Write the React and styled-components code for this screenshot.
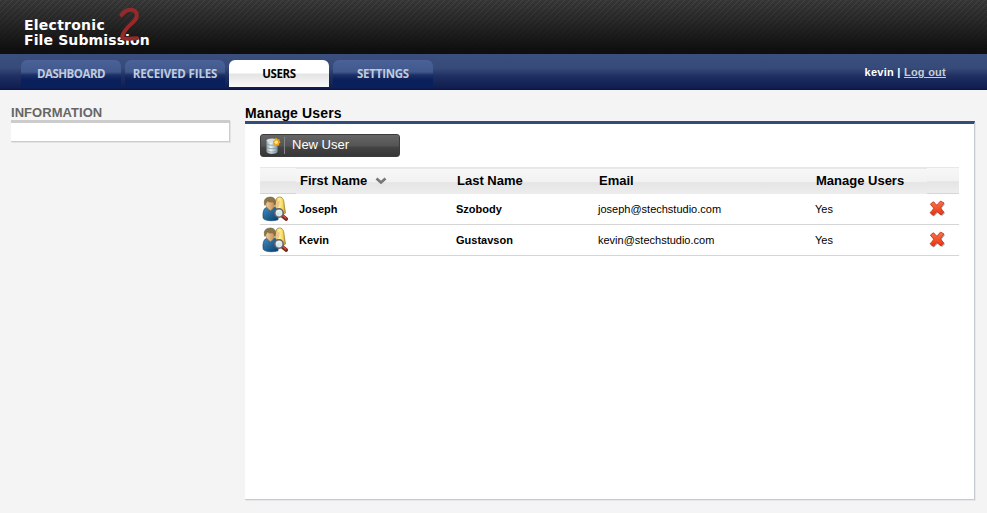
import React from "react";
import styled, { createGlobalStyle } from "styled-components";

const GlobalStyle = createGlobalStyle`
  body {
    margin: 0;
    background: #f4f4f4;
    font-family: "Liberation Sans", Arial, sans-serif;
    color: #000;
  }
  * { box-sizing: border-box; }
`;

const Page = styled.div`
  height: 513px;
  overflow: hidden;
`;

const Header = styled.header`
  height: 54px;
  padding: 18px 0 0 24px;
  position: relative;
  background:
    linear-gradient(rgba(54, 54, 54, 0.1), rgba(15, 15, 15, 1) 92%),
    repeating-linear-gradient(135deg, #484848 0 0.9px, #363636 1.2px 4.243px);
`;

const Logo = styled.div`
  font: bold 14px/15px "DejaVu Sans", Verdana, sans-serif;
  color: #fff;
  white-space: nowrap;
`;

const LogoLine = styled.div`
  letter-spacing: ${(p) => p.$spacing};
`;

const LogoMark = styled.svg`
  position: absolute;
  left: 116px;
  top: 6px;
`;

const Nav = styled.nav`
  height: 36px;
  padding: 6px 41px 3px 21px;
  display: flex;
  gap: 4px;
  background: linear-gradient(#3a4f7d 0, #364b79 14px, #202f62 22px, #0f1d4f 34px, #07144a 36px);
`;

const Tab = styled.a`
  width: 100px;
  height: 27px;
  border-radius: 6px 6px 0 0;
  display: flex;
  justify-content: center;
  font: 700 11.5px/28px "Open Sans", "Trebuchet MS", sans-serif;
  letter-spacing: ${(p) => p.$spacing};
  white-space: nowrap;
  color: ${(p) => (p.$active ? "#000" : "#c0cbdf")};
  background: ${(p) =>
    p.$active
      ? "linear-gradient(#fff 0, #fff 13px, #e4e4e4 14px, #f8f8f8 27px)"
      : "linear-gradient(#4a6298 0, #41588c 12px, #1b3066 15px, #0a205c 20px, #08205c 27px)"};
`;

const Account = styled.div`
  margin-left: auto;
  font-size: 11px;
  font-weight: bold;
  line-height: 24px;
  letter-spacing: 0.25px;
  color: #fff;
`;

const LogOut = styled.a`
  color: #c9ccd3;
  text-decoration: underline;
`;

const Content = styled.main`
  display: flex;
  gap: 15px;
  padding: 15px 11px 0;
`;

const Sidebar = styled.aside`
  width: 219px;
`;

const SideTitle = styled.h2`
  margin: 0;
  height: 15px;
  font-size: 13px;
  line-height: 16px;
  letter-spacing: 0.05px;
  color: #666;
`;

const SideBox = styled.div`
  height: 22px;
  background: #fff;
  border: solid #ccc;
  border-width: 3px 1px 1px 0;
  box-shadow: 1px 1px 0 #e3e3e3;
`;

const Main = styled.section`
  width: 730px;
`;

const Title = styled.h1`
  margin: 0;
  height: 16px;
  font-size: 14px;
  line-height: 17px;
  letter-spacing: 0.15px;
`;

const Panel = styled.div`
  height: 379px;
  padding: 10px 15px;
  background: #fff;
  border-top: 3px solid #344b7b;
  border-right: 1px solid #c5c9d2;
  border-bottom: 1px solid #c5c9d2;
  box-shadow: 1px 1px 0 #e5e7eb;
`;

const NewButton = styled.button`
  width: 140px;
  height: 23px;
  padding: 0 0 2px 4px;
  display: flex;
  align-items: center;
  border: 1px solid #3c3c3c;
  border-radius: 3px;
  background: linear-gradient(#666, #555 50%, #434343 60%, #363636);
  color: #fff;
  font: 13px "Liberation Sans", Arial, sans-serif;
`;

const Separator = styled.span`
  width: 1px;
  height: 17px;
  margin: 2px 7px 0 2px;
  background: #858585;
`;

const Table = styled.div`
  margin-top: 10px;
  width: 699px;
`;

const columns = "36px 157px 142px 217px 115px 32px";

const HeadRow = styled.div`
  display: grid;
  grid-template-columns: ${columns};
  height: 27px;
`;

const HeadCell = styled.div`
  display: flex;
  gap: 8px;
  padding-left: 4px;
  font-size: 13px;
  font-weight: bold;
  line-height: 24px;
  border-top: ${(p) => (p.$blank ? "1px" : "2px")} solid #e8e8e8;
  background: linear-gradient(#f7f7f7 0, #f2f2f2 50%, #e5e5e5 55%, #ededed 100%);
  border-bottom: ${(p) => (p.$blank ? "1px solid #d5d5d5" : "0")};
`;

const SortArrow = styled.svg`
  margin-top: 7px;
`;

const Row = styled.div`
  display: grid;
  grid-template-columns: ${columns};
  height: 31px;
  border-bottom: 1px solid #d5d5d5;
`;

const Cell = styled.div`
  padding-left: 3px;
  font-size: 11px;
  line-height: 31px;
  font-weight: ${(p) => (p.$bold ? "bold" : "normal")};
`;

const IconCell = styled.div`
  display: flex;
  padding: ${(p) => p.$pad};
`;

const DatabaseIcon = () => (
  <svg width="17" height="18" viewBox="0 -1 17 18">
    <defs>
      <linearGradient id="db" x1="0" x2="1">
        <stop offset="0" stopColor="#94a5b0" />
        <stop offset=".4" stopColor="#edf3f5" />
        <stop offset="1" stopColor="#7890a0" />
      </linearGradient>
    </defs>
    <path d="M1.5 3.5v11c0 3 11 3 11 0v-11z" fill="url(#db)" />
    <ellipse cx="7" cy="3.5" rx="5.5" ry="2" fill="#d3dde2" />
    <path d="M1.5 6.5c1 2.3 10 2.3 11 0M1.5 10c1 2.3 10 2.3 11 0M1.5 13.3c1 2.3 10 2.3 11 0" fill="none" stroke="#7c909d" strokeWidth=".8" />
    <path d="m11.5 1 1.2 1.4 1.9-.2-.2 1.9 1.2 1.4-1.4 1.1-.1 1.9-1.8-.1-1.5 1-1-1.5-1.9-.4.5-1.8-.7-1.7 1.7-.8.7-1.8z" fill="#eda61f" />
    <circle cx="11.3" cy="5.2" r="1.7" fill="#ffe88e" />
  </svg>
);

const UsersIcon = () => (
  <svg width="26" height="26" viewBox="0 0 26 26">
    <defs>
      <linearGradient id="hair" x1="0" x2="1">
        <stop offset="0" stopColor="#c89b2c" />
        <stop offset=".4" stopColor="#fff2a0" />
        <stop offset=".75" stopColor="#f5d95e" />
        <stop offset="1" stopColor="#b98f20" />
      </linearGradient>
      <linearGradient id="shirt" x1="0" y1="0" x2="1" y2="1">
        <stop offset="0" stopColor="#3f8cc0" />
        <stop offset="1" stopColor="#073b6c" />
      </linearGradient>
      <linearGradient id="skin" x1="0" x2="1">
        <stop offset="0" stopColor="#f3cf98" />
        <stop offset="1" stopColor="#c48d55" />
      </linearGradient>
    </defs>
    <path d="M12.5 14c1-4-.5-13 5-13 4 0 4.5 4 4.7 8l1.3 8-4 2.5-7-2z" fill="url(#hair)" stroke="#a58327" strokeWidth=".8" />
    <path d="M14 5.500c2 .3 3-.5 3.500-1.500.3 3 .2 6-2 8.500l-2-2z" fill="#ecc68b" />
    <path d="M1.2 22.300c-.6-5 0-9.500 3.300-11l4 2 3.800-2c3.500 1.200 4.500 6 3.700 12.500-4 1.300-13 1.500-14.800-1.500z" fill="url(#shirt)" stroke="#174765" strokeWidth=".7" />
    <path d="M3.800 6c0 4 1.200 6.700 4.700 8.500 3.300-1.800 4-5 4-9z" fill="url(#skin)" stroke="#a87441" strokeWidth=".5" />
    <path d="M3 9.500C1.200 5 3 1.500 7.200 1.200 12 .5 14.500 3.500 12.800 9L11.600 5.800C9 6 6.800 5.800 5.700 5L4 6.500z" fill="#8c744a" stroke="#65552f" strokeWidth=".6" />
    <path d="m20.500 20 3.700 3" stroke="#7f261b" strokeWidth="3.6" strokeLinecap="round" />
    <path d="m21 19.700 2.800 2.300" stroke="#dc5742" strokeWidth="1.2" strokeLinecap="round" />
    <circle cx="17" cy="17" r="4.2" fill="#dcebf3" fillOpacity=".95" stroke="#695f60" strokeWidth="1.5" />
    <path d="M14.500 17c.2-1.800 1.600-2.500 3-2.200" stroke="#fff" fill="none" />
  </svg>
);

const DeleteIcon = () => (
  <svg width="17" height="17" viewBox="0 0 17 17">
    <defs>
      <linearGradient id="cross" x1="0" y1="0" x2="0" y2="1">
        <stop offset="0" stopColor="#fb7450" />
        <stop offset="1" stopColor="#ee300b" />
      </linearGradient>
    </defs>
    <path d="M5 3 8.500 6 13 2l3 2-3.500 4.500L16 13l-3 3-4-3.500L5 16.500l-3-2 4-5.200L2 5z" fill="#555" opacity=".5" />
    <path d="M4.500 1.700C5.500 2.500 6.800 4.300 8 5.300c1.200-1.200 2-3.200 3.600-4.300L15 3c-1.300 1.600-2.700 3-3.500 4.800.8 1.600 2 2.800 3.200 4.200L12 15c-1.700-1-2.700-2.500-4.200-3.500-1.200 1.200-2 2.700-3.600 3.800L1 12.700c1.400-1.500 2.900-2.700 3.700-4.500C3.800 6.800 2.300 5.700 1.400 4z" fill="url(#cross)" stroke="#b9351a" strokeWidth=".8" strokeLinejoin="round" />
  </svg>
);

const tabs = [
  { label: "DASHBOARD", spacing: "-0.5px" },
  { label: "RECEIVED FILES", spacing: "-0.13px" },
  { label: "USERS", spacing: "-0.35px", active: true },
  { label: "SETTINGS", spacing: "-0.25px" },
];

const users = [
  { first: "Joseph", last: "Szobody", email: "joseph@stechstudio.com" },
  { first: "Kevin", last: "Gustavson", email: "kevin@stechstudio.com" },
];

export default function App() {
  return (
    <Page>
      <GlobalStyle />
      <Header>
        <Logo>
          <LogoLine $spacing="0.25px">Electronic</LogoLine>
          <LogoLine $spacing="0.12px">File Submission</LogoLine>
        </Logo>
        <LogoMark width="28" height="36" viewBox="0 0 28 36">
          <path d="M5.500 9C8 5 13 2.700 17.500 4.200c5 2.300 4 8-.3 11.800C12.500 20.500 7 25 6.200 30.500c-.3 2 3 2.200 5.800 2.200l9-.4" fill="none" stroke="#982929" strokeWidth="4" strokeLinecap="round" strokeLinejoin="round" />
        </LogoMark>
      </Header>
      <Nav>
        {tabs.map((t) => (
          <Tab key={t.label} $active={t.active} $spacing={t.spacing}>{t.label}</Tab>
        ))}
        <Account>kevin | <LogOut>Log out</LogOut></Account>
      </Nav>
      <Content>
        <Sidebar>
          <SideTitle>INFORMATION</SideTitle>
          <SideBox />
        </Sidebar>
        <Main>
          <Title>Manage Users</Title>
          <Panel>
            <NewButton><DatabaseIcon /><Separator />New User</NewButton>
            <Table>
              <HeadRow>
                <HeadCell $blank />
                <HeadCell>
                  First Name
                  <SortArrow width="12" height="10" viewBox="0 0 12 10">
                    <path d="m1.500 2.500 4.500 4 4.500-4" fill="none" stroke="#777" strokeWidth="2.8" />
                  </SortArrow>
                </HeadCell>
                <HeadCell>Last Name</HeadCell>
                <HeadCell>Email</HeadCell>
                <HeadCell>Manage Users</HeadCell>
                <HeadCell $blank />
              </HeadRow>
              {users.map((u) => (
                <Row key={u.first}>
                  <IconCell $pad="2px 0 0 2px"><UsersIcon /></IconCell>
                  <Cell $bold>{u.first}</Cell>
                  <Cell $bold>{u.last}</Cell>
                  <Cell>{u.email}</Cell>
                  <Cell>Yes</Cell>
                  <IconCell $pad="6px 0 0 2px"><DeleteIcon /></IconCell>
                </Row>
              ))}
            </Table>
          </Panel>
        </Main>
      </Content>
    </Page>
  );
}
